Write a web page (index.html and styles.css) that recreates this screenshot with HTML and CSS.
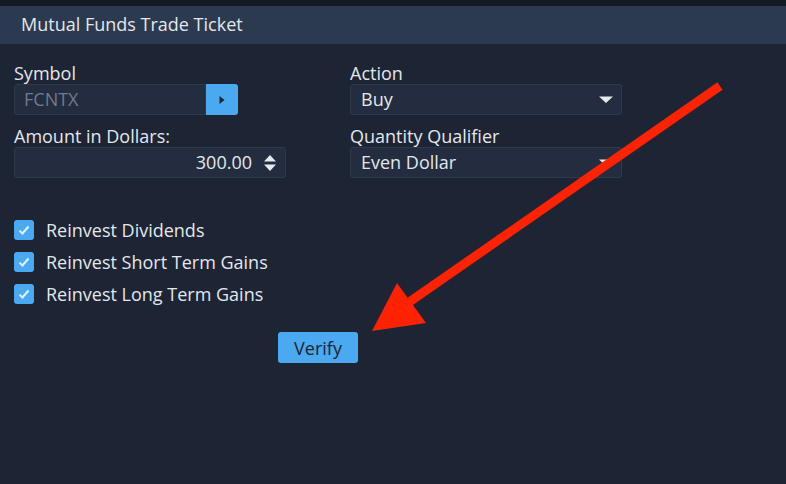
FILE: index.html
```html
<!DOCTYPE html>
<html>
<head>
<meta charset="utf-8">
<link rel="stylesheet" href="styles.css">
</head>
<body>
<div class="top-strip"></div>
<div class="header">Mutual Funds Trade Ticket</div>
<div class="content">
  <div class="grid">
    <div class="field">
      <label class="lbl">Symbol</label>
      <div class="symbol-row">
        <div class="input symbol">FCNTX</div>
        <div class="go-btn"><svg width="8" height="10" viewBox="0 0 8 10"><path d="M1.5 1 L6.5 5 L1.5 9 Z" fill="#1d2433"/></svg></div>
      </div>
    </div>
    <div class="field">
      <label class="lbl">Action</label>
      <div class="input select">Buy<svg class="caret" width="14" height="8" viewBox="0 0 14 8"><path d="M0 0.5 H14 L7 7 Z" fill="#e6eaf0"/></svg></div>
    </div>
    <div class="field">
      <label class="lbl">Amount in Dollars:</label>
      <div class="input amount">300.00<svg class="spin" width="14" height="20" viewBox="0 0 14 20"><path d="M7 2 L13 8.5 H1 Z M1 11.5 H13 L7 18 Z" fill="#e6eaf0"/></svg></div>
    </div>
    <div class="field">
      <label class="lbl">Quantity Qualifier</label>
      <div class="input select">Even Dollar<svg class="caret" width="14" height="8" viewBox="0 0 14 8"><path d="M0 0.5 H14 L7 7 Z" fill="#e6eaf0"/></svg></div>
    </div>
  </div>
  <div class="checks">
    <div class="check"><span class="box"><svg width="12" height="10" viewBox="0 0 12 10"><path d="M1.5 5.5 L4.5 8.5 L10.5 1.5" fill="none" stroke="#e6eef8" stroke-width="2"/></svg></span>Reinvest Dividends</div>
    <div class="check"><span class="box"><svg width="12" height="10" viewBox="0 0 12 10"><path d="M1.5 5.5 L4.5 8.5 L10.5 1.5" fill="none" stroke="#e6eef8" stroke-width="2"/></svg></span>Reinvest Short Term Gains</div>
    <div class="check"><span class="box"><svg width="12" height="10" viewBox="0 0 12 10"><path d="M1.5 5.5 L4.5 8.5 L10.5 1.5" fill="none" stroke="#e6eef8" stroke-width="2"/></svg></span>Reinvest Long Term Gains</div>
  </div>
  <div class="actions"><button class="verify">Verify</button></div>
</div>
<svg class="arrow" width="786" height="484" viewBox="0 0 786 484">
  <line x1="720" y1="86" x2="405" y2="305" stroke="#ff2200" stroke-width="9"/>
  <path d="M372 331 L397 283 L426 323 Z" fill="#ff2200"/>
</svg>
</body>
</html>
```
FILE: styles.css
```css
html, body {
  margin: 0;
  padding: 0;
}
body {
  width: 786px;
  height: 484px;
  background: #1d2433;
  font-family: "Open Sans", "Noto Sans", sans-serif;
  color: #e3e7ed;
  overflow: hidden;
  position: relative;
}
.top-strip {
  height: 6px;
  background: #151b26;
}
.header {
  height: 38px;
  background: #2b3a4e;
  padding-left: 21px;
  font-size: 18px;
  line-height: 37px;
  color: #e3e7ed;
}
.content {
  padding: 18px 14px 0 14px;
}
.grid {
  display: grid;
  grid-template-columns: 272px 272px;
  column-gap: 64px;
  row-gap: 10px;
}
.field {
  display: flex;
  flex-direction: column;
}
.lbl {
  font-size: 18px;
  line-height: 22px;
  height: 22px;
  color: #e3e7ed;
}
.input {
  box-sizing: border-box;
  height: 31px;
  background: #232d3f;
  border: 1px solid #2e3a4c;
  border-radius: 3px;
  font-size: 18px;
  line-height: 29px;
  display: flex;
  align-items: center;
}
.symbol-row {
  display: flex;
  width: 224px;
}
.symbol {
  width: 192px;
  padding-left: 9px;
  color: #6f7b8c;
  border-radius: 3px 0 0 3px;
}
.go-btn {
  width: 32px;
  height: 31px;
  background: #4aa9f0;
  border-radius: 0 3px 3px 0;
  display: flex;
  align-items: center;
  justify-content: center;
}
.select {
  padding-left: 10px;
  padding-right: 8px;
  justify-content: space-between;
}
.amount {
  justify-content: flex-end;
  padding-right: 8px;
  gap: 11px;
}
.checks {
  margin-top: 42px;
  display: flex;
  flex-direction: column;
  gap: 12px;
}
.check {
  display: flex;
  align-items: center;
  height: 20px;
  font-size: 18px;
  color: #e3e7ed;
}
.box {
  width: 20px;
  height: 20px;
  border-radius: 3px;
  background: #4aa9f0;
  display: inline-flex;
  align-items: center;
  justify-content: center;
  margin-right: 12px;
}
.actions {
  padding-left: 264px;
  margin-top: 28px;
}
.verify {
  width: 80px;
  height: 31px;
  background: #4aa9f0;
  border: none;
  border-radius: 3px;
  color: #1d2433;
  font-family: "Open Sans", "Noto Sans", sans-serif;
  font-size: 18px;
  padding: 0;
}
.arrow {
  position: absolute;
  left: 0;
  top: 0;
  pointer-events: none;
}
```
